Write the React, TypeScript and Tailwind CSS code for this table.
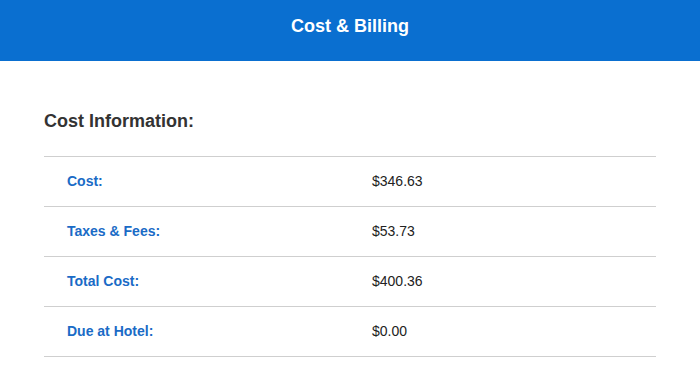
const rows = [
  { label: 'Cost:', value: '$346.63' },
  { label: 'Taxes & Fees:', value: '$53.73' },
  { label: 'Total Cost:', value: '$400.36' },
  { label: 'Due at Hotel:', value: '$0.00' },
]

export default function App() {
  return (
    <div className="min-h-screen bg-white font-['Liberation_Sans',Arial,sans-serif]">
      {/* Header */}
      <header className="h-[61px] bg-[#0a6fd0] flex justify-center pt-[16px]">
        <h1 className="text-white text-[18px] font-bold leading-[20px]">Cost &amp; Billing</h1>
      </header>

      {/* Cost Information */}
      <section className="px-[44px] pt-[49px]">
        <h2 className="text-[18px] font-bold text-[#333] leading-[22px] mb-[24px]">Cost Information:</h2>
        <div className="w-[612px] border-b border-[#cfcfcf]">
          {rows.map((r, i) => (
            <div key={i} className="h-[50px] flex items-center border-t border-[#cfcfcf]">
              <div className="w-[328px] pl-[23px] text-[14px] font-bold text-[#1a6bc6]">{r.label}</div>
              <div className="text-[14px] text-[#222]">{r.value}</div>
            </div>
          ))}
        </div>
      </section>
    </div>
  )
}
